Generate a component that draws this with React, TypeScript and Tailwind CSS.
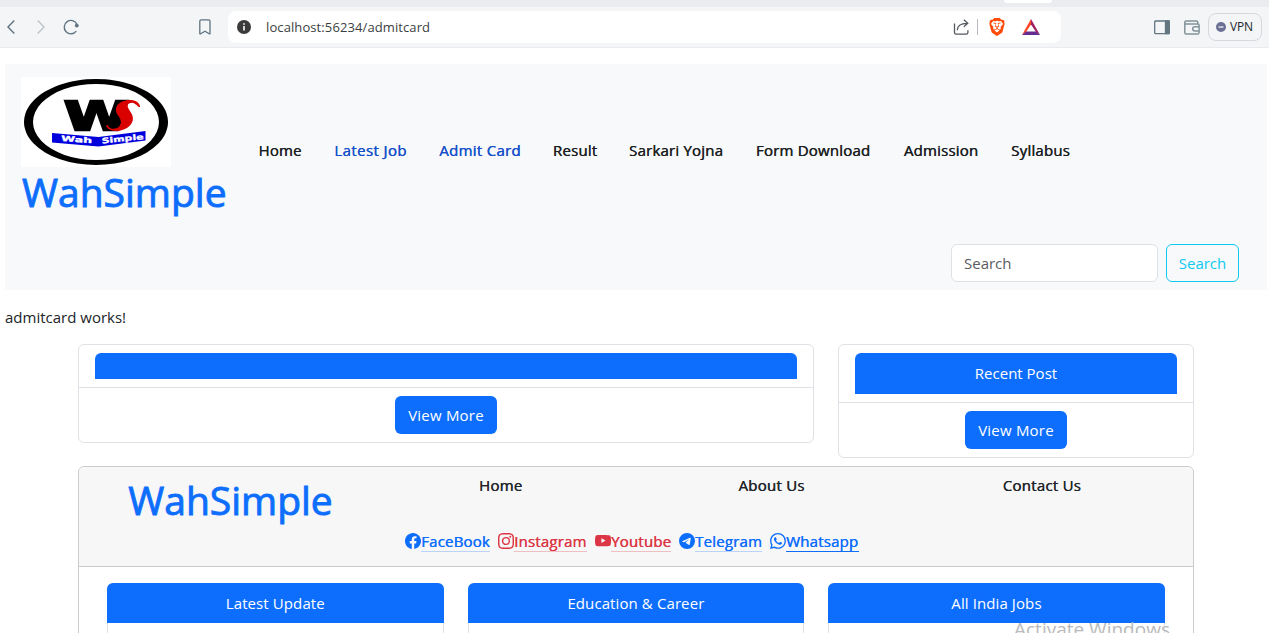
import React from "react";
import { BsFacebook, BsInstagram, BsYoutube, BsTelegram, BsWhatsapp } from "react-icons/bs";
import { SiBrave } from "react-icons/si";

function BrowserBar() {
  return (
    <div className="h-12 shrink-0 border-b border-[#e9ebee] bg-[#f3f5f7]">
      <div className="flex h-[7px] justify-end bg-[#ebecf0] pr-[217px]">
        <div className="h-[3px] w-[48px] rounded-b-[5px] bg-white" />
      </div>
      <div className="flex h-10 items-center text-[#5f7380]">
        <svg className="ml-[6px] h-4 w-[10px]" viewBox="0 0 10 16" fill="none" stroke="currentColor" strokeWidth="1.4"><path d="M8.3 1.5 2 8l6.3 6.5" /></svg>
        <svg className="ml-5 h-4 w-[10px] text-[#bcc4c9]" viewBox="0 0 10 16" fill="none" stroke="currentColor" strokeWidth="1.4"><path d="M1.7 1.5 8 8l-6.3 6.5" /></svg>
        <svg className="ml-4 h-[18px] w-[18px]" viewBox="0 0 18 18" fill="none" stroke="currentColor" strokeWidth="1.4"><path d="M14.3 13.2A6.7 6.7 0 1 1 15 6.2" /><circle cx="14.8" cy="7.6" r="1.9" fill="currentColor" stroke="none" /></svg>
        <svg className="ml-[118px] h-4 w-[14px]" viewBox="0 0 14 16" fill="none" stroke="currentColor" strokeWidth="1.3"><path d="M1.8 2.2q0-1.4 1.4-1.4h7.4q1.4 0 1.4 1.4v12.6h-.8L7 12.2l-4.4 2.6h-.8z" strokeLinejoin="round" /></svg>
        <div className="ml-4 flex h-8 w-[833px] items-center rounded-lg bg-white">
          <svg className="ml-[9px] h-[14px] w-[14px]" viewBox="0 0 14 14"><circle cx="7" cy="7" r="7" fill="#3b3b3b" /><path d="M7 6v4.5M7 3.2v1.6" stroke="#fff" strokeWidth="1.6" /></svg>
          <span className="ml-[15px] w-[190px] whitespace-nowrap pt-px text-[13px] tracking-[0.1px] text-[#3c3f43]">localhost:56234/admitcard</span>
          <svg className="ml-[497px] h-4 w-[17px] text-[#54595e]" viewBox="0 0 17 16" fill="none" stroke="currentColor" strokeWidth="1.3"><path d="M1.5 4.5v9q0 1.7 1.7 1.7h10q1.7 0 1.7-1.7v-2.2" /><path d="M4.3 11.3q.1-7 9.7-7M10.8.8l4 3.5-4 3.5" /></svg>
          <div className="ml-[7px] h-4 w-px bg-[#b7bcc2]" />
          <SiBrave className="ml-[10px] h-[18px] w-[18px] text-[#ff4b0a]" />
          <svg className="ml-4 h-4 w-[18px]" viewBox="0 0 18 16"><path d="M9 0 0 16l4-3L9 5.5z" fill="#ff4724" /><path d="m9 0 9 16-4-3L9 5.5z" fill="#9e1f63" /><path d="m0 16 4-3.5h10l4 3.5z" fill="#662d91" /></svg>
        </div>
        <svg className="ml-[93px] h-[15px] w-[16px] text-[#627681]" viewBox="0 0 16 15" fill="none" stroke="currentColor" strokeWidth="1.3"><rect x=".7" y="1" width="14.6" height="12.6" rx=".7" /><path d="M11.5 1h3.5v12.6h-3.5z" fill="currentColor" /></svg>
        <svg className="ml-[14px] h-[15px] w-[16px] text-[#82929b]" viewBox="0 0 16 15" fill="none" stroke="currentColor" strokeWidth="1.5"><path d="M13.800 3.800V2.300q0-1.200-1.200-1.200H2Q.8 1.100.8 2.400v10q0 1.500 1.500 1.500h11.500q1.300 0 1.300-1.300V5.200q0-1.300-1.300-1.300H2Q.8 3.900.8 2.400" /><path d="M15 6.700h-4.200q-2.100 0-2.100 2.100t2.100 2.100H15" /></svg>
        <div className="ml-2 flex h-7 w-[54px] items-center rounded-lg border border-[#d5d9de] pl-[7px]">
          <svg className="h-[10px] w-[10px]" viewBox="0 0 10 10"><circle cx="5" cy="5" r="5" fill="#6b7094" /><path d="M2.5 5h5" stroke="#e8eaf2" strokeWidth="1.4" /></svg>
          <span className="ml-1 text-[12px] tracking-[-0.2px] text-[#22262a]">VPN</span>
        </div>
      </div>
    </div>
  );
}

function Logo() {
  return (
    <svg className="block h-[90px] w-[150px]" viewBox="0 0 150 90">
      <rect width="150" height="90" fill="#fff" />
      <path fillRule="evenodd" d="M75 2a72 43 0 1 0 .01 0zM75 7a63 38 0 1 1-.01 0z" />
      <text x="43" y="53" fontFamily="DejaVu Sans" fontWeight="700" fontSize="39.5" textLength="65" lengthAdjust="spacingAndGlyphs" stroke="#000" strokeWidth="2.4">W</text>
      <path d="M119 29C117 22 107 22 101 24.500C94 28 93.500 34 97 38.500C101 43 101 49 96 51C91 53 88 51 87 48.500C86 47.500 84.500 48.500 85.500 50C89 55 98 55 104 52C112 48 113.500 42 110.500 36.500C107.500 31.500 105 28.500 108 26.500C112 24.500 114.500 27 117 29.500C118.500 30.500 119.500 30 119 29z" fill="#d90000" />
      <path d="m31 56 46.500 4 47-6v9.500l-47 6L31 65.500z" fill="#0000dc" />
      <g fill="#fff" fontFamily="DejaVu Sans" fontWeight="700" fontSize="7.5" stroke="#fff" strokeWidth="0.3">
        <text x="40" y="64" textLength="31" lengthAdjust="spacingAndGlyphs" transform="rotate(4 40 64)">Wah</text>
        <text x="81" y="66.5" textLength="42" lengthAdjust="spacingAndGlyphs" transform="rotate(-6 81 66.5)">Simple</text>
      </g>
    </svg>
  );
}

const navItems = [
  { label: "Home", box: "w-11" },
  { label: "Latest Job", box: "w-[73px] text-[#1450c8] tracking-[0.4px]" },
  { label: "Admit Card", box: "w-[82px] text-[#1450c8] tracking-[0.3px]" },
  { label: "Result", box: "w-11" },
  { label: "Sarkari Yojna", box: "w-[94px]" },
  { label: "Form Download", box: "w-[116px]" },
  { label: "Admission", box: "w-[76px]" },
  { label: "Syllabus", box: "w-[59px]" },
];

function SiteHeader() {
  return (
    <header className="mt-4 mr-[2px] ml-[5px] h-[226px] shrink-0 bg-[#f8f9fb] px-4 pt-[13px]">
      <div className="flex h-[147px] items-center">
        <div className="h-full w-[205px]">
          <Logo />
          <div className="pl-px whitespace-nowrap text-[39px] leading-[50px] text-[#0d6efd] [-webkit-text-stroke:0.9px]">WahSimple</div>
        </div>
        <nav className="ml-8 flex gap-8 text-[15px] tracking-[0.2px] text-[#1b1f22] [text-shadow:0.4px_0_0_currentColor]">
          {navItems.map((item) => (
            <a key={item.label} className={`flex justify-center whitespace-nowrap ${item.box}`}>{item.label}</a>
          ))}
        </nav>
      </div>
      <div className="mt-5 flex justify-end gap-2 pr-3 text-[15px]">
        <div className="flex h-[38px] w-[207px] items-center rounded-md border border-[#dee2e6] bg-white px-3 text-[#595c5f]">Search</div>
        <button className="h-[38px] w-[73px] rounded-md border border-[#0dcaf0] text-[#0dcaf0]">Search</button>
      </div>
    </header>
  );
}

function MoreButton() {
  return <button className="h-[38px] w-[102px] rounded-md bg-[#0d6efd] text-[15px] tracking-[0.2px] whitespace-nowrap text-white">View More</button>;
}

const socials = [
  { label: "FaceBook", Icon: BsFacebook, tone: "text-[#0d6efd]", line: "w-[69px] border-[#b9d3fb]" },
  { label: "Instagram", Icon: BsInstagram, tone: "text-[#dc3545]", line: "w-[73px] border-[#eec0c4]" },
  { label: "Youtube", Icon: BsYoutube, tone: "text-[#dc3545]", line: "w-[60px] border-[#eec0c4]" },
  { label: "Telegram", Icon: BsTelegram, tone: "text-[#0d6efd]", line: "w-[67px] border-[#b9d3fb]" },
  { label: "Whatsapp", Icon: BsWhatsapp, tone: "text-[#0d6efd]", line: "w-[73px] border-[#0d6efd]" },
];

function FooterCard() {
  return (
    <footer className="mt-2 ml-[78px] h-[300px] w-[1116px] rounded-t-md border border-[#cbcbcb]">
      <div className="h-[100px] rounded-t-md border-b border-[#cbcbcb] bg-[#f7f7f7]">
        <div className="flex h-[66px]">
          <div className="w-[302px] pt-2 pl-px text-center text-[39px] leading-[50px] text-[#0d6efd] [-webkit-text-stroke:0.9px]">WahSimple</div>
          <div className="grid w-[811px] grid-cols-3 pt-[7px] text-center text-[15px] leading-[22px] tracking-[0.25px] text-[#212529] [text-shadow:0.4px_0_0_currentColor]">
            <span className="pr-[31px]">Home</span>
            <span className="pr-[30px]">About Us</span>
            <span className="pr-[30px]">Contact Us</span>
          </div>
        </div>
        <div className="ml-[326px] flex gap-2 text-[15px] leading-[17px] tracking-[0.2px]">
          {socials.map(({ label, Icon, tone, line }) => (
            <a key={label} className={`flex ${tone}`}>
              <Icon className="h-4 w-4" />
              <span className={`h-[19px] border-b whitespace-nowrap [text-shadow:0.4px_0_0_currentColor] ${line}`}>{label}</span>
            </a>
          ))}
        </div>
      </div>
      <div className="flex gap-6 pt-4 pl-7">
        {["Latest Update", "Education & Career", "All India Jobs"].map((title) => (
          <section key={title} className="h-[180px] w-[336.6px] rounded-t-md border-x border-[#dee2e6]">
            <h2 className="-mx-px flex h-10 items-center justify-center rounded-t-md bg-[#0d6efd] text-[15px] tracking-[0.1px] text-white">{title}</h2>
          </section>
        ))}
      </div>
    </footer>
  );
}

export default function App() {
  return (
    <div className="relative flex h-[633px] w-[1269px] flex-col overflow-hidden bg-white font-['Open_Sans',sans-serif] text-[#212529]">
      <BrowserBar />
      <SiteHeader />
      <p className="mt-[15px] ml-[5px] h-6 shrink-0 text-[15px] leading-6">admitcard works!</p>
      <main className="mt-[15px] ml-[78px] flex h-[114px] shrink-0 items-start gap-6">
        <section className="h-[99px] w-[736px] rounded-md border border-[#dee2e6]">
          <div className="h-[43px] border-b border-[#dee2e6] px-4 pt-2">
            <div className="h-[26px] rounded-t-md bg-[#0d6efd]" />
          </div>
          <div className="flex justify-center pt-2"><MoreButton /></div>
        </section>
        <section className="h-[114px] w-[356px] rounded-md border border-[#dee2e6]">
          <div className="h-[58px] border-b border-[#dee2e6] px-4 pt-2">
            <div className="flex h-[41px] items-center justify-center rounded-t-md bg-[#0d6efd] text-[15px] text-white">Recent Post</div>
          </div>
          <div className="flex justify-center pt-2"><MoreButton /></div>
        </section>
      </main>
      <FooterCard />
      <div className="absolute top-[616px] left-[1014px] whitespace-nowrap text-[19px] leading-[26px] text-[#b9babb]">Activate Windows</div>
    </div>
  );
}
